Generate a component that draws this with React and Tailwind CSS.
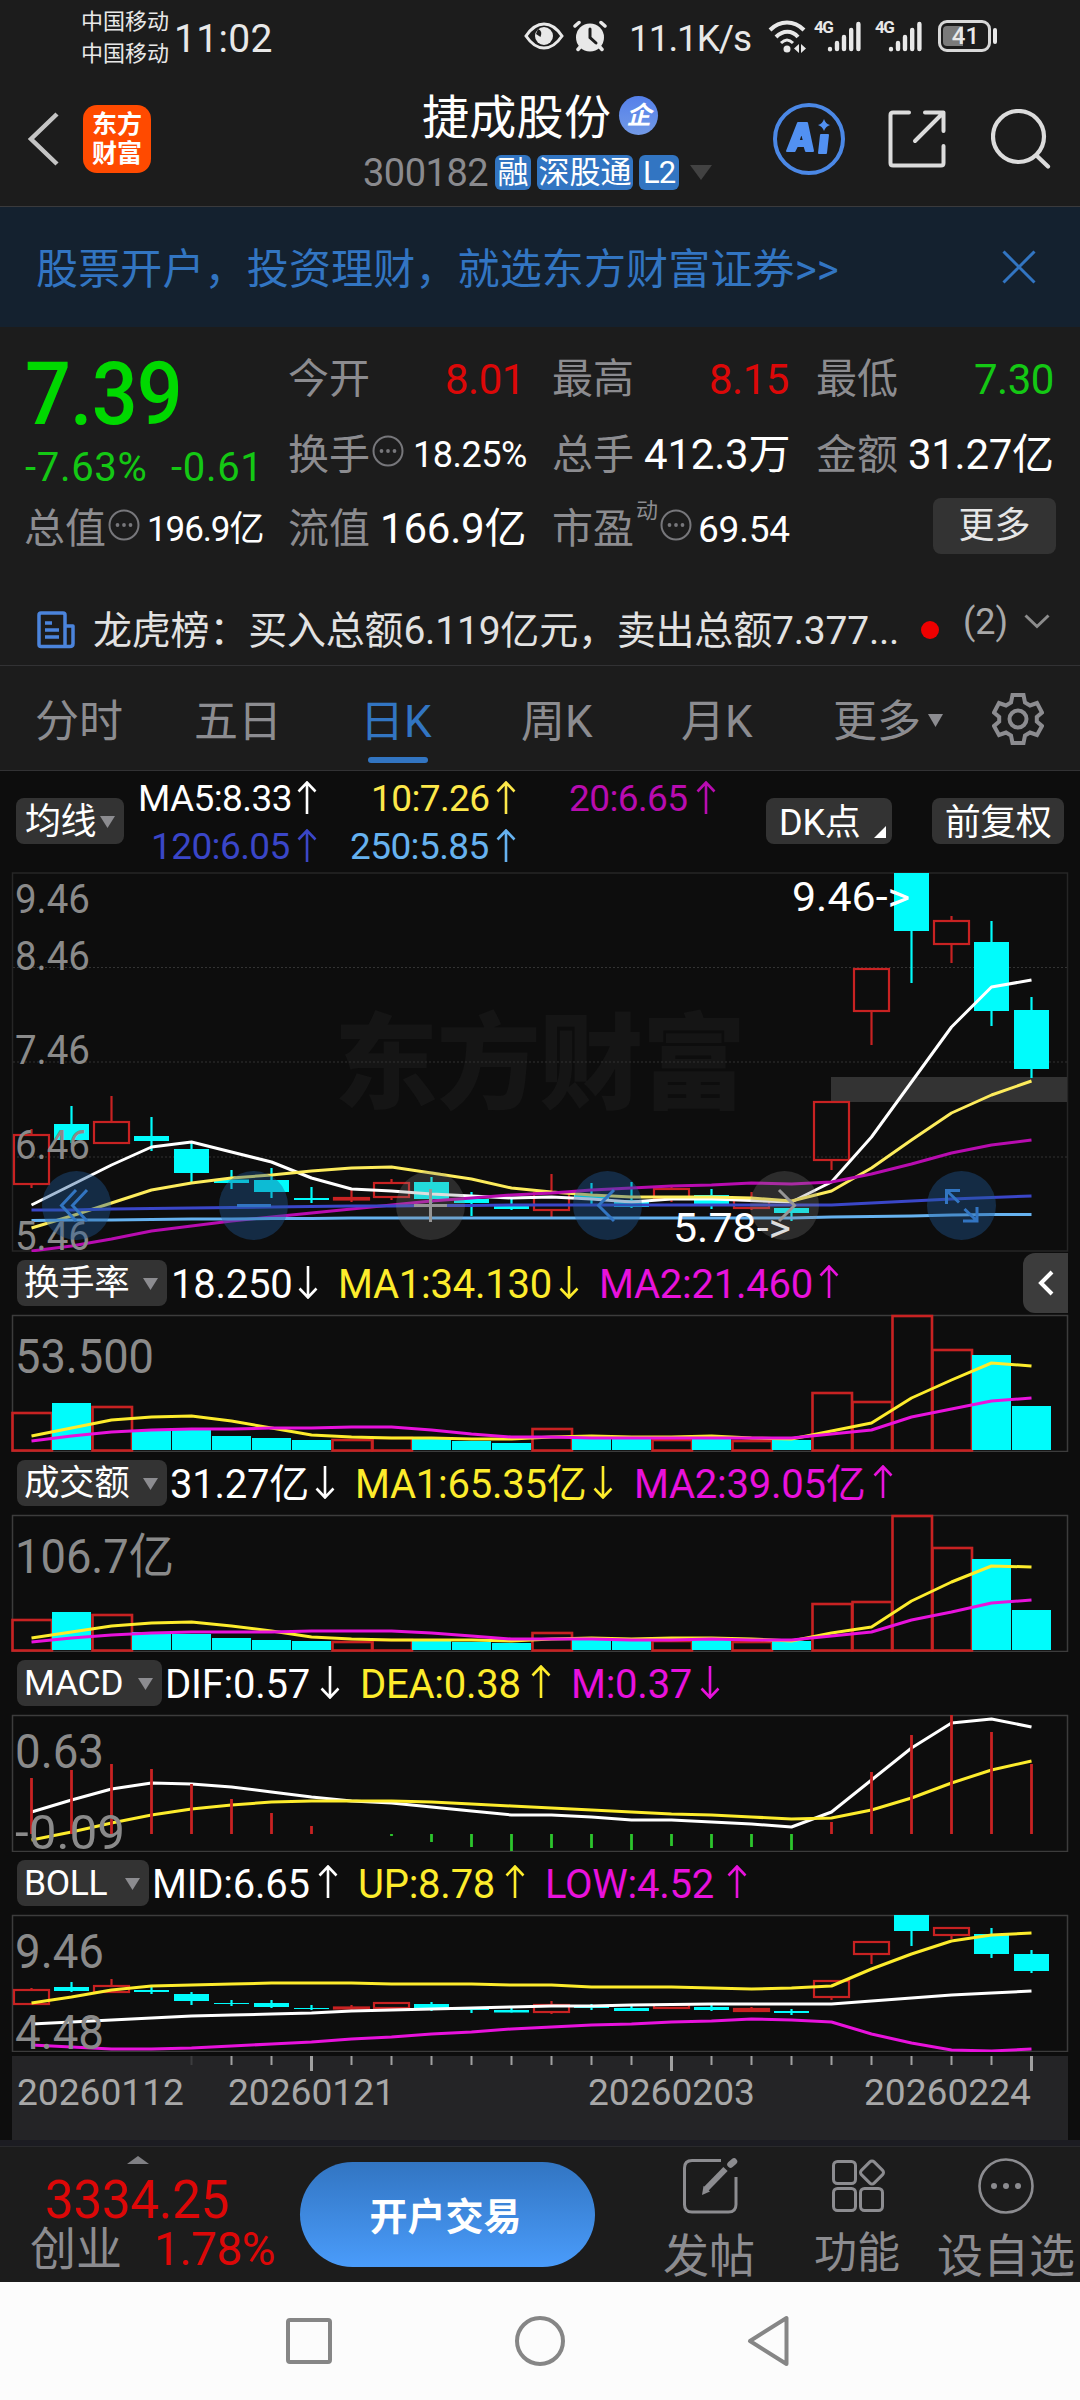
import React, { useState } from 'react';

const CYAN = '#00fcfc';
const RED = '#c82222';
const YELLOW = '#fdec2c';
const MAGENTA = '#e812dc';

// x centre of the n-th trading day, 26 days on screen
const dayX = (i) => 31.5 + i * 40;

// up/down, high, body top, body bottom, low
const CANDLES = [
  ['r', 1129, 1135, 1184, 1188], ['c', 1106, 1124, 1140, 1143], ['r', 1096, 1122, 1143, 1143],
  ['c', 1117, 1136, 1141, 1151], ['c', 1143, 1149, 1173, 1183], ['c', 1170, 1179.5, 1183, 1189],
  ['c', 1168, 1180, 1192, 1198], ['c', 1187, 1198, 1200, 1203], ['r', 1190, 1198, 1199.5, 1202],
  ['r', 1179, 1183, 1197, 1200], ['c', 1177, 1182, 1199, 1203], ['c', 1192, 1199, 1203, 1216],
  ['c', 1197, 1206, 1209, 1210], ['r', 1174, 1193, 1210, 1217], ['c', 1183, 1195, 1199, 1204],
  ['c', 1182, 1200, 1207, 1208], ['r', 1187, 1189, 1198, 1202], ['c', 1189, 1195, 1204, 1209],
  ['r', 1192, 1200, 1208, 1210], ['c', 1208, 1208, 1213, 1221], ['r', 1102, 1102, 1160, 1170],
  ['r', 968, 969, 1011, 1045], ['c', 873, 873, 931, 983], ['r', 916, 921, 944, 963],
  ['c', 921, 942, 1011, 1026], ['c', 997, 1010, 1069, 1078],
];

const BOLL_CANDLES = [
  ['r', 1988, 1990, 2004, 2005], ['c', 1982, 1987, 1991, 1992], ['r', 1979, 1986, 1992, 1993],
  ['c', 1985, 1990, 1992, 1994], ['c', 1992, 1994, 2001, 2005], ['c', 2000, 2003, 2004, 2006],
  ['c', 2000, 2003, 2007, 2008], ['c', 2005, 2008, 2009, 2010], ['r', 2005, 2007.5, 2008.5, 2010],
  ['r', 2002, 2003, 2008, 2009], ['c', 2002, 2004, 2008, 2011], ['c', 2007, 2009, 2010, 2013],
  ['c', 2007, 2010, 2012.5, 2013], ['r', 2001, 2005, 2012, 2014], ['c', 2004, 2006, 2008, 2010],
  ['c', 2004, 2008, 2011, 2011], ['r', 2004, 2005, 2008, 2009], ['c', 2005, 2007, 2010, 2011],
  ['r', 2007, 2009, 2011, 2012], ['c', 2009, 2011, 2013, 2015], ['r', 1980, 1981, 1997, 2000],
  ['r', 1942, 1942, 1954, 1964], ['c', 1915, 1915, 1931, 1946], ['r', 1927, 1928, 1935, 1939],
  ['c', 1928, 1934, 1954, 1958], ['c', 1950, 1954, 1971, 1973],
];

const MA5 = [1205, 1185, 1165, 1147, 1142, 1152, 1162, 1178, 1189, 1191, 1194, 1196, 1198, 1197, 1199, 1202, 1199, 1199, 1200.5, 1202, 1182, 1137, 1082, 1027, 987, 980];
const MA10 = [1228, 1216, 1203, 1190, 1183, 1178, 1175, 1171, 1168, 1167, 1173, 1179, 1188, 1192, 1195, 1197, 1197, 1197, 1198, 1201, 1191, 1168, 1140, 1113, 1095, 1081];
const MA20 = [1251, 1246, 1239, 1231, 1226, 1221, 1217, 1213, 1209, 1205, 1201, 1198, 1195, 1193, 1190, 1188, 1186, 1185, 1183, 1184, 1182, 1174, 1164, 1153, 1145, 1140];
const MA120 = [1210, 1210, 1209, 1208.5, 1208, 1207.5, 1207, 1206.5, 1206, 1206, 1205.5, 1205.5, 1205, 1205, 1205, 1205, 1205, 1205, 1205, 1205, 1205, 1203, 1201, 1199, 1197.5, 1196];
const MA250 = [1220.5, 1220, 1220, 1219.5, 1219, 1219, 1218.5, 1218.5, 1218, 1218, 1218, 1218, 1218, 1218, 1218, 1218, 1218, 1218, 1218, 1218, 1217, 1216.5, 1216, 1215, 1214.5, 1214.5];

const COLORS = ['r', 'c', 'r', 'c', 'c', 'c', 'c', 'c', 'r', 'r', 'c', 'c', 'c', 'r', 'c', 'c', 'r', 'c', 'r', 'c', 'r', 'r', 'r', 'r', 'c', 'c'];

const TURNOVER = {
  base: 1450,
  bars: [1413, 1403, 1407, 1430, 1430, 1436, 1438, 1440, 1440, 1438, 1439, 1441, 1443, 1429, 1439, 1439, 1440, 1439, 1441, 1440, 1393, 1402, 1316, 1350, 1355, 1406],
  ma1: [1436, 1428, 1420, 1417, 1416, 1421, 1428, 1435, 1437, 1438, 1438, 1439, 1439, 1437, 1436, 1437, 1437, 1436, 1438, 1439, 1431, 1423, 1398, 1380, 1363, 1366],
  ma2: [1441, 1436, 1432, 1430, 1429, 1429, 1428, 1428, 1427, 1427, 1430, 1434, 1437, 1437, 1438, 1438, 1438, 1438, 1438, 1438, 1434, 1430, 1417, 1409, 1401, 1398],
};

const AMOUNT = {
  base: 1650,
  bars: [1620, 1612, 1615, 1632, 1634, 1638, 1640, 1641, 1642, 1640, 1640, 1642, 1643, 1633, 1640, 1641, 1641, 1640, 1642, 1641, 1604, 1602, 1516, 1548, 1559, 1610],
  ma1: [1638, 1632, 1626, 1623, 1622, 1626, 1631, 1637, 1639, 1640, 1640, 1640, 1641, 1639, 1638, 1639, 1638, 1638, 1639, 1641, 1633, 1627, 1601, 1582, 1566, 1567],
  ma2: [1642, 1638, 1635, 1633, 1632, 1632, 1632, 1631, 1631, 1631, 1633, 1636, 1639, 1639, 1639, 1640, 1640, 1639, 1640, 1640, 1636, 1632, 1620, 1612, 1603, 1600],
};

const MACD_ZERO = 1834;
const MACD_BARS = [1778, 1770, 1764, 1769, 1784, 1799, 1813, 1826, 1834, 1836, 1842, 1847, 1851, 1848, 1848, 1850, 1846, 1848, 1847, 1850, 1822, 1772, 1735, 1715, 1732, 1764];
const DIF = [1812, 1800, 1789, 1783, 1784, 1787, 1792, 1797, 1801, 1803, 1807, 1811, 1815, 1815, 1817, 1820, 1820, 1822, 1824, 1827, 1812, 1780, 1748, 1723, 1719, 1727];
const DEA = [1840, 1832, 1823, 1815, 1809, 1805, 1802, 1801, 1801, 1801, 1802, 1804, 1806, 1808, 1810, 1812, 1814, 1815, 1817, 1819, 1818, 1810, 1798, 1783, 1770, 1761];

const BOLL_UP = [2003, 1997, 1990, 1986, 1985, 1984, 1983, 1983, 1983, 1984, 1984, 1984, 1985, 1985, 1987, 1987, 1987, 1988, 1989, 1988, 1986, 1969, 1954, 1941, 1935, 1933];
const BOLL_MID = [2024, 2022, 2020, 2018, 2016, 2015, 2014, 2013, 2011, 2010, 2009, 2008, 2007, 2006, 2006, 2005, 2004.5, 2004, 2004, 2004, 2004, 2001, 1998, 1995, 1993, 1991];
const BOLL_LOW = [2045, 2047, 2049, 2049, 2048, 2046, 2044, 2042, 2039, 2037, 2034, 2032, 2029, 2027, 2025, 2024, 2022, 2021, 2019, 2020, 2022, 2034, 2043, 2050, 2051, 2049];

function Line({ data, color, width = 3 }) {
  return (
    <polyline
      points={data.map((y, i) => `${dayX(i)},${y}`).join(' ')}
      fill="none"
      stroke={color}
      strokeWidth={width}
      strokeLinejoin="round"
    />
  );
}

function Candles({ data }) {
  return data.map(([kind, high, top, bottom, low], i) => {
    const x = dayX(i);
    const color = kind === 'c' ? CYAN : RED;
    return (
      <g key={i} stroke={color} strokeWidth="2.2">
        {high < top && <path d={`M${x} ${high}V${top}`} />}
        {low > bottom && <path d={`M${x} ${bottom}V${low}`} />}
        {kind === 'c' ? (
          <rect x={x - 17.5} y={top} width="35" height={Math.max(bottom - top, 1)} fill={CYAN} stroke="none" />
        ) : (
          <rect x={x - 17.5} y={top} width="35" height={Math.max(bottom - top, 1)} fill="none" />
        )}
      </g>
    );
  });
}

function Frame({ y, height, color = '#3c3c3c' }) {
  return <rect x="12.5" y={y} width="1055" height={height} fill="none" stroke={color} strokeWidth="1.5" />;
}

function ScaleLabel({ x = 15, y, width, size = 40, children }) {
  return (
    <text x={x} y={y} fontSize={size} fill="#8a8a8a" textLength={width} lengthAdjust="spacingAndGlyphs">
      {children}
    </text>
  );
}

function Arrow({ down, className }) {
  return (
    <svg viewBox="0 0 20 34" className={`h-[34px] w-5 shrink-0 ${className || ''}`} fill="none" stroke="currentColor" strokeWidth="2.6">
      {down ? <path d="M10 1V32M1.5 23.5L10 32.5L18.5 23.5" /> : <path d="M10 33V2M1.5 10.5L10 1.5L18.5 10.5" />}
    </svg>
  );
}

function MoreDots() {
  return (
    <svg viewBox="0 0 32 32" className="mx-0.5 -mt-2 size-8 shrink-0" fill="none" stroke="#77777b" strokeWidth="2">
      <circle cx="16" cy="16" r="14.5" />
      <g fill="#77777b" stroke="none">
        <circle cx="9.5" cy="16" r="1.9" />
        <circle cx="16" cy="16" r="1.9" />
        <circle cx="22.5" cy="16" r="1.9" />
      </g>
    </svg>
  );
}

function Signal() {
  return (
    <div className="flex h-8 w-[61px] items-end">
      <span className="mr-[1px] self-start text-[17px] leading-[14px] font-bold tracking-[-1.5px]">4G</span>
      <svg viewBox="0 0 34 32" className="-ml-1.5 h-8 w-[34px]" stroke="#e8e8e8" strokeWidth="4.4" strokeLinecap="round">
        <path d="M3 29V29.2M10 23V29M17 17V29M24.2 10V29M31.4 4V29" />
      </svg>
    </div>
  );
}

function StatusBar() {
  return (
    <div className="flex h-[72px] items-center text-[#e8e8e8]">
      <div className="mt-[3px] ml-[81px] w-[93px] text-[22px] leading-8">
        <div>中国移动</div>
        <div>中国移动</div>
      </div>
      <div className="mt-1.5 w-[350px] text-[39px] leading-none tracking-[0.3px]">11:02</div>
      <svg viewBox="0 0 40 28" className="h-7 w-10">
        <path d="M2 14C8 5 14 2 20 2S32 5 38 14C32 23 26 26 20 26S8 23 2 14Z" fill="none" stroke="#e8e8e8" strokeWidth="3" />
        <circle cx="20" cy="14" r="9" fill="#e8e8e8" />
        <path d="M14 7Q19 9 16.5 15L12 12Z" fill="#1c1c1c" />
      </svg>
      <svg viewBox="0 0 34 32" className="ml-[9px] h-8 w-[34px]" stroke="#e8e8e8" strokeWidth="3.5" strokeLinecap="round">
        <circle cx="17" cy="17.5" r="14" fill="#e8e8e8" stroke="none" />
        <path d="M2 6L6 2.5M32 6L28 2.5M5 29.5L8 26M29 29.5L26 26" />
        <path d="M17 9V17.5L23 23" stroke="#1c1c1c" fill="none" strokeWidth="3" />
      </svg>
      <div className="mt-1 ml-[22px] w-[139px] text-[37px] leading-none tracking-[-1.1px]">11.1K/s</div>
      <svg viewBox="0 0 40 34" className="mt-0.5 h-[34px] w-10" fill="none" stroke="#e8e8e8" strokeWidth="4">
        <path d="M2 10C12 0 26 0 36 10M8 17C15 10 24 10 30 17" />
        <path d="M13 23C17 19 21 19 25 23" strokeWidth="3" />
        <circle cx="19" cy="29" r="3.5" fill="#e8e8e8" stroke="none" />
        <path d="M31 24V33L26 28.5ZM33 24V33L38 28.5Z" fill="#e8e8e8" stroke="none" />
      </svg>
      <div className="flex pl-1.5 text-[#e8e8e8]">
        <Signal />
        <Signal />
      </div>
      <div className="relative ml-0.5 flex h-8 w-[53px] items-center rounded-[9px] border-3 border-[#d8d8d8]">
        <div className="ml-[2px] h-[20px] w-[20px] rounded-l-[4px] bg-[#7a7a7a]" />
        <span className="absolute inset-x-0 pl-0.5 text-center text-[24px] leading-none font-medium">41</span>
      </div>
      <div className="ml-0.5 h-4 w-1 rounded-full bg-[#e8e8e8]" />
    </div>
  );
}

function Header() {
  return (
    <header className="flex h-[135px] items-center border-b border-[#3a3a3c]">
      <svg viewBox="0 0 32 54" className="ml-[27px] h-[54px] w-8" fill="none" stroke="#c4c4c4" strokeWidth="4.5">
        <path d="M30 2L4 27L30 52" />
      </svg>
      <div className="ml-6 flex h-[68px] w-[68px] flex-col items-center justify-center rounded-[14px] bg-[#ff4a00] text-[25px] leading-[29px] font-bold text-white">
        <div>东方</div>
        <div>财富</div>
      </div>
      <div className="ml-[212px] w-[410px]">
        <div className="flex h-[58px] items-center pt-2 pl-[59px]">
          <span className="pt-1 text-[47px] leading-none tracking-[0.3px] text-white">捷成股份</span>
          <span className="ml-2 flex size-[39px] items-center justify-center rounded-full bg-linear-to-b from-[#5580ea] to-[#7299e6] text-[25px] leading-none font-bold text-white italic">
            企
          </span>
        </div>
        <div className="flex h-[56px] items-center pt-2 text-[31px] leading-none text-white">
          <span className="w-[132px] pt-0.5 text-[38px] tracking-[-0.5px] text-[#8a8a8e]">300182</span>
          <span className="flex h-[35px] w-9 items-center justify-center rounded-md bg-[#3275c2]">融</span>
          <span className="ml-1.5 flex h-[35px] w-24 items-center justify-center rounded-md bg-[#3275c2]">深股通</span>
          <span className="ml-1.5 flex h-[35px] w-10 items-center justify-center rounded-md bg-[#3275c2] tracking-[-1px]">L2</span>
          <svg viewBox="0 0 22 15" className="ml-[11px] h-[15px] w-[22px]" fill="#424242">
            <path d="M0 0H22L11 15Z" />
          </svg>
        </div>
      </div>
      <svg viewBox="0 0 72 72" className="size-[72px]" fill="none">
        <circle cx="36" cy="36" r="34" stroke="#4b88e6" strokeWidth="4" />
        <g fill="#5291f2" stroke="#5291f2" strokeWidth="2" strokeLinejoin="round">
          <path fillRule="evenodd" d="M25 20H34L40 48H33L31.5 43H24L21.5 48H14ZM28.5 29L25.5 38H31Z" />
          <path d="M48 32H55L53 50H46Z" />
        </g>
        <path d="M51 16Q52.500 21 57 22Q52.500 23.500 51 28Q49.500 23.500 45 22Q49.500 21 51 16Z" fill="#5291f2" />
      </svg>
      <svg viewBox="0 0 58 58" className="ml-[43px] size-[58px]" fill="none" stroke="#dcdcdc" strokeWidth="4" strokeLinecap="round" strokeLinejoin="round">
        <path d="M21 2.5H5Q2.5 2.5 2.5 5V53Q2.5 55.5 5 55.5H53Q55.5 55.5 55.5 53V36" />
        <path d="M37 2.5H55.5V21M55 3L27 31" />
      </svg>
      <svg viewBox="0 0 60 60" className="ml-[45px] size-[60px]" fill="none" stroke="#dcdcdc" strokeWidth="4.2" strokeLinecap="round">
        <circle cx="27.5" cy="27.5" r="25.5" />
        <path d="M46 47L57 57.5" />
      </svg>
    </header>
  );
}

function Banner() {
  const [open, setOpen] = useState(true);
  return (
    <div className="flex h-[120px] items-center bg-[#14212f] pr-11 pl-9 text-[#3275c2]">
      <p className="flex-1 pt-1.5 text-[42px] leading-none tracking-[0.15px]">{open ? '股票开户，投资理财，就选东方财富证券>>' : ''}</p>
      <button onClick={() => setOpen(false)} aria-label="关闭">
        <svg viewBox="0 0 34 34" className="size-[34px]" fill="none" stroke="currentColor" strokeWidth="3">
          <path d="M1.5 1.5L32.5 32.5M32.5 1.5L1.5 32.5" />
        </svg>
      </button>
    </div>
  );
}

function Quote() {
  return (
    <section className="leading-none">
      <div className="flex h-[171px]">
        <div className="w-[288px] pl-[25px]">
          <div className="flex h-[104px] items-center pt-[29px]">
            <span className="origin-left scale-x-[0.92] text-[88px] font-medium tracking-[-1px] text-[#00d800]">7.39</span>
          </div>
          <div className="flex h-[74px] items-center text-[40px] tracking-[0.7px] text-[#14c814]">
            <span className="w-[146px]">-7.63%</span>
            <span>-0.61</span>
          </div>
        </div>
        <div className="pt-[15px] text-[41px] text-[#8c8c90]">
          <div className="flex h-[76px] items-center">
            <span className="flex w-[264px]"><span className="w-[157px]">今开</span><span className="text-[42px] tracking-[-0.5px] text-[#dc0808]">8.01</span></span>
            <span className="flex w-[264px]"><span className="w-[157px]">最高</span><span className="text-[42px] tracking-[-0.5px] text-[#dc0808]">8.15</span></span>
            <span className="flex"><span className="w-[158px]">最低</span><span className="text-[42px] tracking-[-0.5px] text-[#14c814]">7.30</span></span>
          </div>
          <div className="flex h-[74px] items-center">
            <span className="flex w-[264px] items-center">
              换手
              <MoreDots />
              <span className="ml-[7px] text-[36px] tracking-[-0.5px] text-white">18.25%</span>
            </span>
            <span className="flex w-[264px] items-center">
              总手
              <span className="ml-[10px] text-[42px] tracking-[-0.2px] text-white">412.3万</span>
            </span>
            <span className="flex items-center">
              金额
              <span className="ml-[10px] text-[42px] tracking-[-0.3px] text-white">31.27亿</span>
            </span>
          </div>
        </div>
      </div>
      <div className="flex h-[56px] items-center pl-[24px] text-[41px] text-[#8c8c90]">
        <span className="flex w-[264px] items-center pt-1.5">
          总值
          <MoreDots />
          <span className="ml-[5px] text-[35px] tracking-[-1.1px] text-white">196.9亿</span>
        </span>
        <span className="flex w-[264px] items-center pt-1.5">
          流值
          <span className="ml-[10px] text-[42px] tracking-[-0.2px] text-white">166.9亿</span>
        </span>
        <span className="flex w-[381px] items-center pt-1.5">
          市盈
          <span className="-mt-9 ml-0.5 w-[22px] text-[22px]">动</span>
          <MoreDots />
          <span className="ml-1 text-[37px] tracking-[-0.2px] text-white">69.54</span>
        </span>
        <button className="flex h-[56px] w-[123px] items-center justify-center rounded-lg bg-[#333333] text-[36px] text-[#e6e6e6]">更多</button>
      </div>
      <div className="flex h-[112px] items-center border-b border-[#323234] pt-10">
        <svg viewBox="0 0 38 38" className="ml-[37px] size-[38px]" fill="none" stroke="#4b84dc" strokeWidth="3.5" strokeLinejoin="round">
          <path d="M28 35.5H4Q2 35.5 2 33.5V4Q2 2 4 2H26Q28 2 28 4V35.5H33Q36 35.5 36 32.5V15H28" />
          <path d="M8 12H15M8 19H22M8 26H22" />
        </svg>
        <p className="ml-[18px] w-[813px] pt-1 text-[39px] tracking-[-0.2px] whitespace-nowrap text-[#e2e2e2]">龙虎榜：买入总额6.119亿元，卖出总额7.377...</p>
        <span className="ml-[15px] size-[18px] rounded-full bg-[#ee0000]" />
        <span className="-mt-4 ml-6 w-[61px] text-[36px] text-[#a8a8a8]">(2)</span>
        <svg viewBox="0 0 26 15" className="-mt-4 h-[15px] w-[26px]" fill="none" stroke="#8c8c8c" strokeWidth="3">
          <path d="M1.5 1.5L13 12.5L24.5 1.5" />
        </svg>
      </div>
    </section>
  );
}

const TABS = [
  { id: 'minute', label: '分时', cell: 'w-[159px]' },
  { id: 'five', label: '五日', cell: 'w-[166px]' },
  { id: 'day', label: '日K', cell: 'w-[161px]' },
  { id: 'week', label: '周K', cell: 'w-[160px]' },
  { id: 'month', label: '月K', cell: 'w-[152px]' },
];

function Tabs() {
  const [active, setActive] = useState('day');
  return (
    <nav className="flex h-[105px] items-center border-b border-[#323234] pl-[35px] text-[44px] leading-none text-[#8c8c90]">
      {TABS.map((tab) => (
        <button
          key={tab.id}
          onClick={() => setActive(tab.id)}
          className={`relative flex h-full items-center pt-2 ${tab.cell} ${active === tab.id ? 'text-[#3275c2]' : ''}`}
        >
          {tab.label}
          {active === tab.id && <span className="absolute bottom-[7px] left-2 h-1.5 w-[60px] rounded-full bg-[#3275c2]" />}
        </button>
      ))}
      <button className="flex w-[159px] items-center pt-2">
        更多
        <svg viewBox="0 0 15 13" className="-mt-1 ml-[7px] h-[13px] w-[15px]" fill="#8c8c90">
          <path d="M0 0H15L7.5 13Z" />
        </svg>
      </button>
      <svg viewBox="0 0 52 52" className="mt-0.5 size-[52px]" fill="none" stroke="#8c8c90" strokeWidth="4">
        <path d="M20.5 2H31.5L33 9.5L38 12.5L45 10L50 19.5L44.8 24V28.5L50 33L45 42L38 39.5L33 42.5L31.5 50H20.5L19 42.5L14 39.5L7 42L2 33L7.2 28.5V24L2 19.5L7 10L14 12.5L19 9.5Z" />
        <circle cx="26" cy="26" r="8.5" />
      </svg>
    </nav>
  );
}

function Caret({ className }) {
  return (
    <svg viewBox="0 0 15 12" className={`h-3 w-[15px] ${className}`} fill="#8c8c90">
      <path d="M0 0H15L7.5 12Z" />
    </svg>
  );
}

function Averages() {
  return (
    <div className="flex h-[100px] items-center pl-4 text-[37px] leading-none tracking-[-0.6px] whitespace-nowrap">
      <button className="flex h-[46px] w-[108px] items-center rounded-lg bg-[#333333] pt-0.5 pl-[9px] text-[36px] tracking-[-0.5px] text-white">
        均线
        <Caret className="ml-1" />
      </button>
      <div className="ml-[14px] w-[628px] pt-[3px]">
        <div className="flex h-12 items-center">
          <span className="w-[159px] text-white">MA5:8.33</span>
          <Arrow className="-mt-0.5 text-white" />
          <span className="ml-[54px] w-[125px] text-[#fde84a]">10:7.26</span>
          <Arrow className="-mt-0.5 text-[#fde84a]" />
          <span className="ml-[53px] w-[127px] text-[#b80cb0]">20:6.65</span>
          <Arrow className="-mt-0.5 text-[#b80cb0]" />
        </div>
        <div className="flex h-12 items-center">
          <span className="ml-[13px] w-[146px] text-[#3a46c8]">120:6.05</span>
          <Arrow className="-mt-0.5 text-[#3a46c8]" />
          <span className="ml-[33px] w-[146px] text-[#66b2f0]">250:5.85</span>
          <Arrow className="-mt-0.5 text-[#66b2f0]" />
        </div>
      </div>
      <button className="relative flex h-[46px] w-[126px] items-center rounded-lg bg-[#333333] pt-1 pl-[13px] text-[36px] tracking-[-0.2px] text-white">
        DK点
        <svg viewBox="0 0 12 12" className="absolute right-1.5 bottom-1.5 size-3" fill="#ffffff">
          <path d="M12 0V12H0Z" />
        </svg>
      </button>
      <button className="ml-10 flex h-[46px] w-[132px] items-center justify-center rounded-lg bg-[#333333] pt-1 text-[36px] tracking-[-0.5px] text-white">前复权</button>
    </div>
  );
}

function KLineChart() {
  return (
    <svg viewBox="0 871 1080 381" className="block h-[381px] w-full">
      <text x="334" y="1101" fontSize="104" fontWeight="900" fill="#151515" textLength="412">东方财富</text>
      <Frame y={873} height={378} color="#262626" />
      {[967.5, 1062, 1157].map((y) => (
        <path key={y} d={`M13 ${y}H1067`} stroke="#333333" strokeDasharray="2 2" />
      ))}
      <rect x="831" y="1077" width="236" height="25" fill="#333333" />
      <Candles data={CANDLES} />
      <Line data={MA5} color="#ffffff" />
      <Line data={MA10} color="#fdec5c" />
      <Line data={MA20} color="#b80cb0" />
      <Line data={MA120} color="#3a46c8" />
      <Line data={MA250} color="#66b2f0" />
      <ScaleLabel y={912.5} width={75}>9.46</ScaleLabel>
      <ScaleLabel y={969.5} width={75}>8.46</ScaleLabel>
      <ScaleLabel y={1063.5} width={75}>7.46</ScaleLabel>
      <ScaleLabel y={1158.5} width={75}>6.46</ScaleLabel>
      <ScaleLabel y={1249.5} width={75}>5.46</ScaleLabel>
      <g fontSize="41" fill="#ffffff">
        <text x="792" y="911" textLength="118" lengthAdjust="spacingAndGlyphs">9.46-&gt;</text>
        <text x="673" y="1241.5" textLength="118" lengthAdjust="spacingAndGlyphs">5.78-&gt;</text>
      </g>
      {[76.5, 253.5, 607.5, 961.5].map((x) => (
        <circle key={x} cx={x} cy="1205.5" r="34.5" fill="#205a98" fillOpacity="0.4" />
      ))}
      {[430.5, 784.5].map((x) => (
        <circle key={x} cx={x} cy="1205.5" r="34.5" fill="#808080" fillOpacity="0.27" />
      ))}
      <g fill="none" stroke="#3275c2" strokeWidth="3">
        <path d="M76 1190L61.5 1205.5L76 1221M87 1190L72.5 1205.5L87 1221" />
        <path d="M237 1205.5H271" />
        <path d="M614 1190L598.5 1205.5L614 1221" />
        <path d="M960 1190.5H946.5V1204M947 1191L959 1202.5M963 1221H977V1207M976.5 1220.5L964.5 1209" />
      </g>
      <g fill="none" stroke="#969696" strokeWidth="3">
        <path d="M414 1205.5H447M430.5 1189V1222" />
        <path d="M779 1190L794.5 1205.5L779 1221" />
      </g>
    </svg>
  );
}

function IndicatorHeader({ name, width, values, children }) {
  return (
    <div className="flex h-[62px] items-center pl-[17px] text-[40px] leading-none tracking-[-0.25px] whitespace-nowrap">
      <button className={`flex h-[46px] items-center justify-between rounded-lg bg-[#333333] pt-0.5 pr-[9px] pl-[7px] text-[35.5px] tracking-[-0.4px] text-white ${width}`}>
        {name}
        <Caret className="" />
      </button>
      {values.map((v) => (
        <div key={v.text} className={`flex items-center ${v.color}`}>
          <span className={`pt-[3px] ${v.cell}`}>{v.text}</span>
          <Arrow down={v.down} className="-mt-0.5" />
        </div>
      ))}
      {children}
    </div>
  );
}

function VolumeChart({ data, viewBox, children }) {
  return (
    <svg viewBox={viewBox} className="block h-[138px] w-full">
      <Frame y={data.base - 134.5} height={136} />
      {data.bars.map((y, i) =>
        COLORS[i] === 'c' ? (
          <rect key={i} x={12 + i * 40} y={y} width="39" height={data.base - y} fill={CYAN} />
        ) : (
          <rect key={i} x={12.5 + i * 40} y={y} width="39.5" height={data.base - y + 0.5} fill="none" stroke={RED} strokeWidth="2.6" />
        )
      )}
      {children}
      <Line data={data.ma1} color={YELLOW} />
      <Line data={data.ma2} color={MAGENTA} />
    </svg>
  );
}

function MacdChart() {
  return (
    <svg viewBox="0 1714 1080 138" className="block h-[138px] w-full">
      <Frame y={1715.5} height={136} />
      <Line data={DIF} color="#ffffff" />
      <Line data={DEA} color={YELLOW} />
      {MACD_BARS.map((y, i) => (
        <path key={i} d={`M${dayX(i)} ${MACD_ZERO}V${y}`} stroke={y > MACD_ZERO ? '#2cc42c' : RED} strokeWidth="2.8" />
      ))}
      <ScaleLabel y={1767.5} width={89} size={48}>0.63</ScaleLabel>
      <ScaleLabel y={1848.5} width={110} size={48}>-0.09</ScaleLabel>
    </svg>
  );
}

function BollChart() {
  return (
    <svg viewBox="0 1914 1080 138" className="block h-[138px] w-full">
      <Frame y={1915.5} height={136} />
      <Candles data={BOLL_CANDLES} />
      <Line data={BOLL_UP} color={YELLOW} />
      <Line data={BOLL_MID} color="#ffffff" />
      <Line data={BOLL_LOW} color={MAGENTA} />
      <ScaleLabel y={1967.5} width={89} size={48}>9.46</ScaleLabel>
      <ScaleLabel y={2048.5} width={89} size={48}>4.48</ScaleLabel>
    </svg>
  );
}

const DATES = [[17, '20260112'], [228, '20260121'], [588, '20260203'], [864, '20260224']];

function DateAxis() {
  return (
    <svg viewBox="0 2052 1080 88" className="block h-[88px] w-full">
      <rect x="12" y="2056" width="1056" height="84" fill="#242426" />
      {Array.from({ length: 22 }, (_, n) => n + 4).map((i) => {
        const major = i === 7 || i === 16 || i === 25;
        return (
          <path
            key={i}
            d={`M${dayX(i)} 2056V${major ? 2071 : 2065}`}
            stroke={i === 4 ? '#3c3c3e' : '#a0a0a0'}
            strokeWidth={major ? 3 : 2}
          />
        );
      })}
      {DATES.map(([x, date]) => (
        <text key={date} x={x} y="2105" fontSize="37" fill="#a8a8a8" textLength="167" lengthAdjust="spacingAndGlyphs">{date}</text>
      ))}
    </svg>
  );
}

function BottomBar() {
  return (
    <footer className="flex h-[136px] border-t border-[#2a2a2c] bg-[#1c1c1c] leading-none">
      <div className="w-[300px] text-[#dc0808]">
        <svg viewBox="0 0 22 8" className="mt-[9px] ml-[127px] h-2 w-[22px]" fill="#808084">
          <path d="M0 8H22L11 0Z" />
        </svg>
        <div className="mt-[11px] flex h-[50px] items-center pl-[45px]">
          <span className="origin-left scale-x-[0.97] text-[53px] leading-[46px] tracking-[-0.4px]">3334.25</span>
        </div>
        <div className="flex items-center pl-[30px]">
          <span className="w-[124px] text-[46px] text-[#8c8c90]">创业</span>
          <span className="origin-left scale-x-[0.98] text-[47px] tracking-[-0.5px]">1.78%</span>
        </div>
      </div>
      <button className="mt-[15px] flex h-[105px] w-[295px] items-center justify-center rounded-full bg-linear-to-b from-[#3275c2] to-[#4a9cfb] pt-1 pr-1 text-[38px] font-bold text-white">
        开户交易
      </button>
      <div className="ml-[68px] w-[151px]">
        <svg viewBox="0 0 56 56" className="mt-[11px] ml-5 size-14" fill="none" stroke="#8c8c90" strokeWidth="3">
          <path d="M38 2.5H9Q1.5 2.5 1.5 10V46.5Q1.5 54 9 54H45.5Q53 54 53 46.5V19" />
          <path d="M42.5 11L23 31" strokeWidth="6" />
          <path d="M20.5 28L19 37L27 33.5Z" fill="#8c8c90" stroke="none" />
          <path d="M47.5 6.5L51 3.5" strokeWidth="6.5" strokeLinecap="round" />
        </svg>
        <div className="mt-[19px] text-[46px] text-[#8c8c90]">发帖</div>
      </div>
      <div className="w-[123px]">
        <svg viewBox="0 0 54 54" className="mt-[12px] ml-[18px] size-[54px]" fill="none" stroke="#8c8c90" strokeWidth="3">
          <rect x="1.5" y="2.5" width="22" height="22" rx="4" />
          <rect x="1.5" y="29.5" width="22" height="22" rx="4" />
          <rect x="28.5" y="29.5" width="22" height="22" rx="4" />
          <rect x="31" y="4.5" width="18" height="18" rx="3" transform="rotate(45 40 13.5)" />
        </svg>
        <div className="mt-[19px] text-[43px] text-[#8c8c90]">功能</div>
      </div>
      <div className="w-[143px]">
        <svg viewBox="0 0 56 56" className="mt-[11px] ml-[41px] size-14" fill="none" stroke="#8c8c90" strokeWidth="2.6">
          <circle cx="28" cy="28" r="26.5" />
          <g fill="#8c8c90" stroke="none">
            <circle cx="16" cy="28" r="3" />
            <circle cx="28" cy="28" r="3" />
            <circle cx="40" cy="28" r="3" />
          </g>
        </svg>
        <div className="mt-[19px] text-[46px] whitespace-nowrap text-[#8c8c90]">设自选</div>
      </div>
    </footer>
  );
}

function SystemNav() {
  return (
    <div className="flex h-[118px] items-center bg-[#fcfcfc]">
      <div className="ml-[286px] size-[46px] rounded-[4px] border-4 border-[#868686]" />
      <div className="ml-[183px] size-[50px] rounded-full border-4 border-[#868686]" />
      <svg viewBox="0 0 44 52" className="ml-[181px] h-[52px] w-11" fill="none" stroke="#868686" strokeWidth="4" strokeLinejoin="round">
        <path d="M40.5 3V49L4 26Z" />
      </svg>
    </div>
  );
}

export default function App() {
  return (
    <div className="h-[2400px] w-[1080px] overflow-hidden bg-[#1c1c1c] font-[Roboto,'Noto_Sans_CJK_SC',sans-serif]">
      <StatusBar />
      <Header />
      <Banner />
      <Quote />
      <Tabs />
      <main className="bg-[#0d0d0d]">
        <Averages />
        <KLineChart />
        <IndicatorHeader
          name="换手率"
          width="w-[150px]"
          values={[
            { text: '18.250', down: true, color: 'text-white', cell: 'ml-1 w-[127px]' },
            { text: 'MA1:34.130', down: true, color: 'text-[#fdec2c]', cell: 'ml-5 w-[221px]' },
            { text: 'MA2:21.460', down: false, color: 'text-[#e812dc]', cell: 'ml-[20px] w-[220px]' },
          ]}
        >
          <button className="mr-3 ml-auto flex h-[60px] w-[45px] items-center justify-center rounded-l-xl bg-[#3c3c3c]">
            <svg viewBox="0 0 16 26" className="h-[26px] w-4" fill="none" stroke="#ffffff" strokeWidth="4">
              <path d="M14 2L3 13L14 24" />
            </svg>
          </button>
        </IndicatorHeader>
        <VolumeChart data={TURNOVER} viewBox="0 1314 1080 138">
          <ScaleLabel y={1373} width={139} size={48}>53.500</ScaleLabel>
        </VolumeChart>
        <IndicatorHeader
          name="成交额"
          width="w-[150px]"
          values={[
            { text: '31.27亿', down: true, color: 'text-white', cell: 'ml-[3px] w-[145px]' },
            { text: 'MA1:65.35亿', down: true, color: 'text-[#fdec2c]', cell: 'ml-5 w-[238px]' },
            { text: 'MA2:39.05亿', down: false, color: 'text-[#e812dc]', cell: 'ml-[21px] w-[239px]' },
          ]}
        />
        <VolumeChart data={AMOUNT} viewBox="0 1514 1080 138">
          <ScaleLabel y={1573} width={159} size={48}>106.7亿</ScaleLabel>
        </VolumeChart>
        <IndicatorHeader
          name="MACD"
          width="w-[145px]"
          values={[
            { text: 'DIF:0.57', down: true, color: 'text-white', cell: 'ml-[3px] w-[155px]' },
            { text: 'DEA:0.38', down: false, color: 'text-[#fdec2c]', cell: 'ml-5 w-[171px]' },
            { text: 'M:0.37', down: true, color: 'text-[#e812dc]', cell: 'ml-5 w-[129px]' },
          ]}
        />
        <MacdChart />
        <IndicatorHeader
          name="BOLL"
          width="w-[132px]"
          values={[
            { text: 'MID:6.65', down: false, color: 'text-white', cell: 'ml-[3px] w-[166px]' },
            { text: 'UP:8.78', down: false, color: 'text-[#fdec2c]', cell: 'ml-[20px] w-[147px]' },
            { text: 'LOW:4.52', down: false, color: 'text-[#e812dc]', cell: 'ml-5 w-[182px]' },
          ]}
        />
        <BollChart />
        <DateAxis />
      </main>
      <div className="h-1.5 bg-[#1c1c22]" />
      <BottomBar />
      <SystemNav />
    </div>
  );
}
